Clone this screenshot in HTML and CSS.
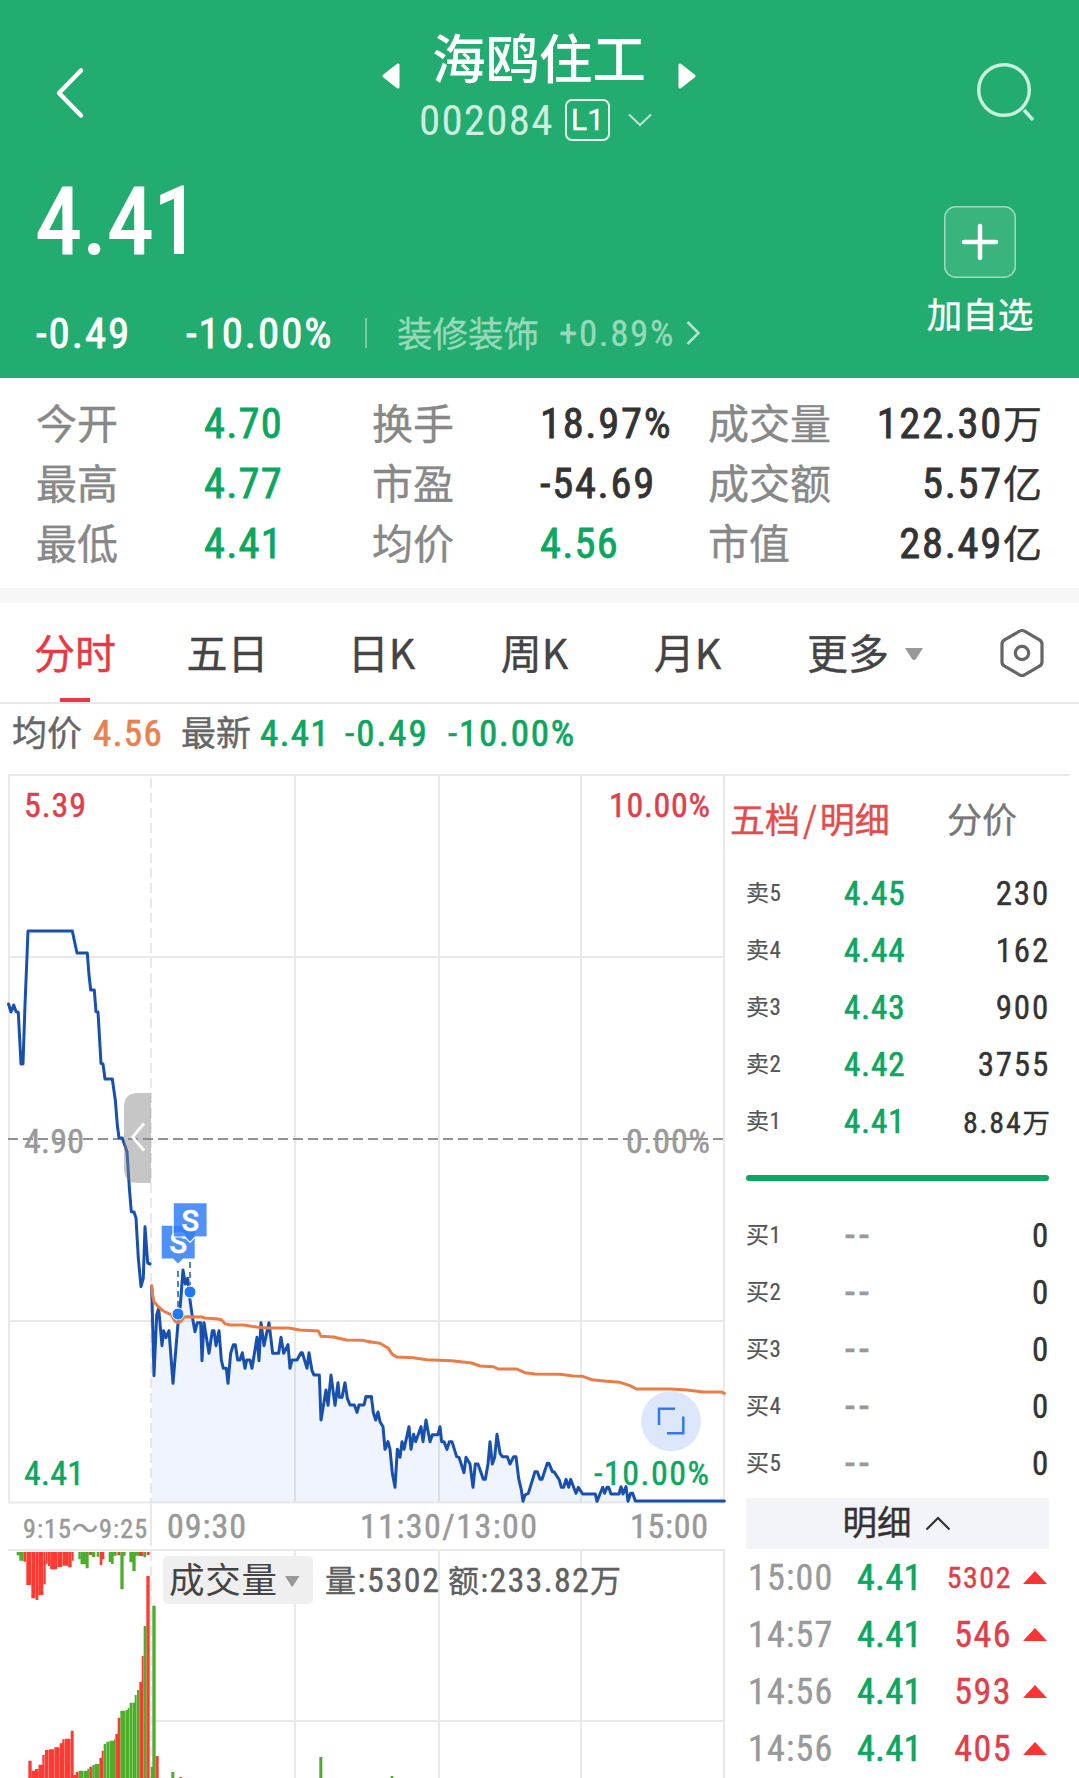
FILE: index.html
```
<!DOCTYPE html>
<html lang="zh-CN">
<head>
<meta charset="utf-8">
<title>海鸥住工 002084</title>
<link rel="stylesheet" href="styles.css">
</head>
<body>
<header class="head">
  <div class="nav">
    <svg class="back" width="32" height="56" viewBox="0 0 32 56"><path d="M27 5.500L5 28l22 22.500"/></svg>
    <div class="title">
      <div class="title-row">
        <svg width="18" height="26" viewBox="0 0 18 26"><path d="M16 2v22L2 13z"/></svg>
        <h1>海鸥住工</h1>
        <svg width="18" height="26" viewBox="0 0 18 26"><path d="M2 2v22l14-11z"/></svg>
      </div>
      <div class="code-row">
        <span class="code">002084</span><span class="level">L1</span>
        <svg width="24" height="14" viewBox="0 0 24 14"><path d="M1 1.500L12 12 23 1.500"/></svg>
      </div>
    </div>
    <svg class="search" width="60" height="60" viewBox="0 0 60 60"><circle cx="28" cy="29" r="25.300"/><path d="M48 49l9 10"/></svg>
  </div>
  <div class="quote">
    <div class="quote-main">
      <div class="price">4.41</div>
      <div class="change">
        <span class="diff">-0.49</span><span class="pct">-10.00%</span><i class="bar"></i>
        <span class="sector">装修装饰</span><span class="sector-pct">+0.89%</span>
        <svg width="14" height="24" viewBox="0 0 14 24"><path d="M1.500 1L12.500 12 1.500 23"/></svg>
      </div>
    </div>
    <div class="add">
      <svg width="72" height="72" viewBox="0 0 72 72"><rect x=".75" y=".75" width="70.500" height="70.500" rx="11"/><path d="M36 20v32M20 36h32"/></svg>
      <span>加自选</span>
    </div>
  </div>
</header>

<section class="stats">
  <span class="k">今开</span><span class="v down">4.70</span><span class="k">换手</span><span class="v">18.97%</span><span class="k">成交量</span><span class="v end">122.30<b>万</b></span>
  <span class="k">最高</span><span class="v down">4.77</span><span class="k">市盈</span><span class="v">-54.69</span><span class="k">成交额</span><span class="v end">5.57<b>亿</b></span>
  <span class="k">最低</span><span class="v down">4.41</span><span class="k">均价</span><span class="v down">4.56</span><span class="k">市值</span><span class="v end">28.49<b>亿</b></span>
</section>

<nav class="tabs">
  <span class="tab on">分时</span><span class="tab">五日</span><span class="tab">日K</span><span class="tab">周K</span><span class="tab">月K</span>
  <span class="more">更多<svg width="20" height="14" viewBox="0 0 20 14"><path d="M1 1h18l-7 11q-2 2-4 0z"/></svg></span>
  <svg class="gear" width="44" height="50" viewBox="0 0 44 50"><path d="M19.500 3.200q2.500-1.400 5 0l15 8.600q2.500 1.500 2.500 4.200v18q0 2.700-2.500 4.200l-15 8.600q-2.500 1.400-5 0l-15-8.600Q2 36.700 2 34V16q0-2.700 2.500-4.200z"/><circle cx="22" cy="25" r="6.700"/></svg>
</nav>

<div class="info">
  <span class="lab">均价</span><span class="n avg">4.56</span><span class="lab l2">最新</span><span class="n n1">4.41</span><span class="n n2">-0.49</span><span class="n n3">-10.00%</span>
</div>

<main class="board">
  <svg class="chart" width="726" height="1004" viewBox="0 774 726 1004">
    <g class="area">
      <path transform="translate(0 1180) scale(.33333)" d="M455 966V318L462 587 470 405 476 385 486 497 491 452 498 473 507 452 519 610 534 430 541 375 549 270 556 312 563 295 570 360 577 410 585 455 592 428 602 428 606 542 612 428 627 520 637 452 642 452 648 497 657 452 664 540 670 565 679 565 684 610 692 520 700 494 706 494 713 540 720 540 727 518 735 565 740 540 750 540 756 565 771 472 777 542 783 428 792 497 807 428 818 520 836 520 843 472 851 520 864 494 870 565 876 540 891 540 903 518 907 518 921 565 927 518 936 572 942 585 958 585 963 720 978 630 984 676 993 585 1005 676 1014 608 1018 652 1026 652 1035 608 1042 655 1050 675 1063 675 1071 697 1077 675 1092 675V966z"/>
      <path transform="translate(360 1280) scale(.33333)" d="M10 666V375L12 375 18 350 34 350 40 398 47 420 54 396 60 425 69 440 75 508 84 485 90 508 97 580 105 622 112 508 120 532 126 485 132 508 147 440 153 508 161 463 167 485 183 440 189 485 198 420 210 485 217 464 234 464 240 440 245 485 252 485 261 508 268 485 276 485 290 530 297 532 312 578 318 532 330 552 339 622 346 552 354 552 370 598 376 598 384 552 390 485 397 552 404 532 411 463 420 520 427 530 442 530 450 552 461 530 468 530 476 595 484 630 489 664 495 645 505 640 525 575 532 575 540 598 546 598 562 550 567 550 577 575 582 575 598 600 604 622 641 622 668 642 818 642 826 666zM10 375V666H12V375z"/>
      <path d="M363 1408H372V1502H363z"/>
    </g>
    <g class="grid">
      <path d="M8 775H726M9 774V1503M8 957H725M8 1321H725M8 1502.500H725M295 776V1502M439 776V1502M581 776V1502M724 776V1502M151 1503V1546M8 1550H725M295 1551V1778M439 1551V1778M581 1551V1778M724 1551V1778M152 1721H725"/>
      <path class="dash" d="M151 778V1502M151 1551V1778"/>
    </g>
    <path class="mid" d="M8 1139H724"/>

    <text class="t gray" x="24" y="1153" textLength="60">4.90</text>
    <text class="t gray" x="626" y="1153" textLength="84">0.00%</text>
    <text class="t red" x="24" y="817" textLength="62">5.39</text>
    <text class="t red" x="609" y="817" textLength="101">10.00%</text>

    <polyline class="line" points="8.500,1004 11,1012 13.700,1005 16,1011.500 18.300,1012.500 21,1064 23,1064 25,1005 28,931 72.300,931 77,953 87.300,953 89,975 90.700,990 94.300,990 96,1011.700 98,1012 101,1063.300 103,1064 105,1079 112.300,1079 115.300,1100 117.300,1125 119,1137.700 122.300,1138 127,1151.700 128.500,1175 129.500,1190 131.300,1211.700 134,1212 136,1218 138.300,1258 141,1286.700 143.300,1278 145,1226.700 147.700,1263 150,1264"/>
    <g transform="translate(0 1180) scale(.33333)">
      <polyline class="line x3" points="455,318 462,587 470,405 476,385 486,497 491,452 498,473 507,452 519,610 534,430 541,375 549,270 556,312 563,295 570,360 577,410 585,455 592,428 602,428 606,542 612,428 627,520 637,452 642,452 648,497 657,452 664,540 670,565 679,565 684,610 692,520 700,494 706,494 713,540 720,540 727,518 735,565 740,540 750,540 756,565 771,472 777,542 783,428 792,497 807,428 818,520 836,520 843,472 851,520 864,494 870,565 876,540 891,540 903,518 907,518 921,565 927,518 936,572 942,585 958,585 963,720 978,630 984,676 993,585 1005,676 1014,608 1018,652 1026,652 1035,608 1042,655 1050,675 1063,675 1071,697 1077,675 1092,675 1098,650 1114,650"/>
      <polyline class="line x3 avgline" points="455,317 458,345 462,365 475,380 490,393 505,400 515,405 518,412 525,424 534,428 543,424 551,412 560,410 605,411 615,414 655,417 665,420 675,431 690,435 730,435 770,441 800,444 865,444 900,450 955,453 963,469 1000,471 1040,480 1090,481 1110,486"/>
    </g>
    <g transform="translate(360 1280) scale(.33333)">
      <polyline class="line x3" points="18,350 34,350 40,398 47,420 54,396 60,425 69,440 75,508 84,485 90,508 97,580 105,622 112,508 120,532 126,485 132,508 147,440 153,508 161,463 167,485 183,440 189,485 198,420 210,485 217,464 234,464 240,440 245,485 252,485 261,508 268,485 276,485 290,530 297,532 312,578 318,532 330,552 339,622 346,552 354,552 370,598 376,598 384,552 390,485 397,552 404,532 411,463 420,520 427,530 442,530 450,552 461,530 468,530 476,595 484,630 489,664 495,645 505,640 525,575 532,575 540,598 546,598 562,550 567,550 577,575 582,575 598,600 604,622 611,622 618,598 626,622 632,598 641,622 648,640 655,622 668,642 706,642 711,664 720,642 728,622 734,640 741,622 746,622 753,642 777,642 783,620 789,642 798,620 804,664 812,640 818,640 826,663 1093,663"/>
      <polyline class="line x3 avgline" points="28,185 60,190 85,205 97,223 110,231 160,233 200,239 275,242 335,249 360,258 400,260 415,267 470,267 495,278 525,282 600,283 640,288 668,289 695,299 740,304 780,307 810,317 830,327 930,327 980,330 1030,336 1085,336 1093,340"/>
    </g>

    <path class="drawer" d="M151 1093H138Q124 1093 124 1107V1169Q124 1183 138 1183H151z"/>
    <path class="drawer-arrow" d="M144 1123.500L132.500 1137 144 1150.500"/>

    <path class="drop" d="M178 1271V1312M190 1242V1285"/>
    <path class="flag" d="M161.700 1225.700H194.700V1258.500H183L178 1263.500 173 1258.500H161.700z"/>
    <text class="s" x="178.300" y="1252.500" text-anchor="middle">S</text>
    <path class="flag front" d="M173.500 1203.300H206.600V1236.700H195L190 1242 185 1236.700H173.500z"/>
    <path class="flag-edge" d="M173 1204V1237H185L190 1242.300 195 1237H207"/>
    <text class="s" x="190.300" y="1230.500" text-anchor="middle">S</text>
    <circle class="dot" cx="178" cy="1314" r="6"/><circle class="dot" cx="190" cy="1292" r="6"/>

    <circle class="zoom-bg" cx="671" cy="1421.300" r="30"/>
    <path class="zoom" d="M659 1425V1408.700H675M683.300 1416.500V1433.300H667"/>
    <text class="t green" x="24" y="1485" textLength="60">4.41</text>
    <text class="t green" x="594" y="1485" textLength="115">-10.00%</text>

    <text class="t gray sm" x="23" y="1538" textLength="124">9:15～9:25</text>
    <text class="t gray" x="167" y="1538" textLength="79">09:30</text>
    <text class="t gray" x="360" y="1538" textLength="177">11:30/13:00</text>
    <text class="t gray" x="630" y="1538" textLength="78">15:00</text>

    <g transform="translate(0 1530) scale(.33333)">
      <path class="up" d="M70 66H78V95H70zM79 66H93V165H79zM94 66H106V205H94zM107 66H115V210H107zM115.500 66H130V195H115.500zM131 66H137V163H131zM138 66H143V103H138zM144 66H150V108H144zM150.500 66H171V118H150.500zM172 66H187V111H172zM188 66H204V107H188zM204.500 66H215V112H204.500zM216 66H221V92H216zM266 66H276V75H266zM299 66H307V105H299zM307 66H313V88H307zM352 66H361V76H352zM417 66H430V78H417zM440 66H449V75H440z"/>
      <path class="dn" d="M50 66H58V76H50zM58 66H70V92H58zM235 66H241V88H235zM241.500 66H257V103H241.500zM257 66H266V115H257zM276 66H286V81H276zM290 66H298V80H290zM326 66H333V96H326zM333 66H341V102H333zM341 66H350V77H341zM361 66H371V178H361zM371 66H377V77H371zM388 66H397V97H388zM397 66H407V123H397zM407 66H417V77H407zM430 66H438V82H430z"/>
      <path class="up" d="M85 744V692H95V744zM95.500 744V722H105V744zM105 744V717H115V744zM115.500 744V704H127V744zM127 744V675H134V744zM135 744V660H146V744zM147 744V658H162V744zM163 744V652H178V744zM179 744V640H187V744zM187 744V628H194V744zM195 744V626H211V744zM212 744V602H221V744zM221 744V735H227V744zM227 744V726H236V744zM268 744V710H277V744zM298 744V684H305V744zM305 744V662H311V744zM346 744V612H353V744zM353 744V563H361V744zM418 744V456H425V744zM425 744V378H431V744zM439 744V138H449V744zM467 744V678H476V744zM538 744V741H547V744z"/>
      <path class="dn" d="M236 744V722H251V744zM252 744V722H262V744zM262 744V716H268V744zM277 744V705H284V744zM284.500 744V702H298V744zM311 744V642H318V744zM319 744V635H328V744zM329 744V632H342V744zM342 744V628H346V744zM361 744V542H376V744zM377 744V540H383V744zM383 744V534H388V744zM389 744V518H397V744zM398 744V518H404V744zM404 744V495H410V744zM411 744V480H418V744zM431 744V288H439V744zM452 744V711H457V744zM457 744V227H467V744zM514 744V726H523V744zM958 744V681H967V744zM1172 744V738H1180V744z"/>
    </g>

    <rect class="pick" x="163" y="1556" width="150" height="48" rx="5"/>
    <text class="cjk dark" x="169" y="1593" textLength="108">成交量</text>
    <path class="gray" d="M285 1576H299.500L293 1586Q292.200 1587.500 291.300 1586z"/>
    <text class="t mid-gray" x="325" y="1592" textLength="114"><tspan class="ch">量</tspan>:5302</text>
    <text class="t mid-gray" x="448" y="1592" textLength="173"><tspan class="ch">额</tspan>:233.82<tspan class="ch">万</tspan></text>
  </svg>

  <aside class="side">
    <div class="side-tabs"><span class="on">五档<i>/</i>明细</span><span>分价</span></div>
    <div class="book">
      <div class="lv"><span class="name">卖5</span><span class="p">4.45</span><span class="q">230</span></div>
      <div class="lv"><span class="name">卖4</span><span class="p">4.44</span><span class="q">162</span></div>
      <div class="lv"><span class="name">卖3</span><span class="p">4.43</span><span class="q">900</span></div>
      <div class="lv"><span class="name">卖2</span><span class="p">4.42</span><span class="q">3755</span></div>
      <div class="lv"><span class="name">卖1</span><span class="p">4.41</span><span class="q small">8.84<b>万</b></span></div>
    </div>
    <div class="ratio"></div>
    <div class="book">
      <div class="lv"><span class="name">买1</span><span class="p none">--</span><span class="q">0</span></div>
      <div class="lv"><span class="name">买2</span><span class="p none">--</span><span class="q">0</span></div>
      <div class="lv"><span class="name">买3</span><span class="p none">--</span><span class="q">0</span></div>
      <div class="lv"><span class="name">买4</span><span class="p none">--</span><span class="q">0</span></div>
      <div class="lv"><span class="name">买5</span><span class="p none">--</span><span class="q">0</span></div>
    </div>
    <div class="detail-head">明细<svg width="26" height="15" viewBox="0 0 26 15"><path d="M1.500 13.500L13 2l11.500 11.500"/></svg></div>
    <div class="ticks">
      <div class="tick"><span class="time">15:00</span><span class="tp">4.41</span><span class="tv small">5302</span><i></i></div>
      <div class="tick"><span class="time">14:57</span><span class="tp">4.41</span><span class="tv">546</span><i></i></div>
      <div class="tick"><span class="time">14:56</span><span class="tp">4.41</span><span class="tv">593</span><i></i></div>
      <div class="tick"><span class="time">14:56</span><span class="tp">4.41</span><span class="tv">405</span><i></i></div>
    </div>
  </aside>
</main>
</body>
</html>
```
FILE: styles.css
```
* { box-sizing: border-box; margin: 0; padding: 0; }
body {
  width: 1079px; height: 1778px; overflow: hidden; background: #fff; color: #333;
  font-family: "Roboto Condensed", "Noto Sans CJK SC", sans-serif;
  white-space: nowrap;
  -webkit-text-stroke: .4px;
}
svg { display: block; flex: none; }
b { font-family: "Noto Sans CJK SC", sans-serif; font-weight: 400; letter-spacing: 0; }
span { flex: none; }

/* header */
.head { height: 378px; background: #22ac6f; color: #fff; }
.nav { display: flex; height: 160px; padding: 0 43px 0 54px; }
.back { margin-top: 65px; fill: none; stroke: #fff; stroke-width: 4.500; stroke-linecap: round; stroke-linejoin: round; }
.title { display: flex; flex-direction: column; align-items: center; width: 314px; margin-left: 296px; padding-top: 26px; }
.title-row { display: flex; justify-content: space-between; width: 314px; height: 63px; }
.title-row svg { margin-top: 37px; fill: #fff; stroke: #fff; stroke-width: 3; stroke-linejoin: round; }
h1 { font: 500 53.500px/60px "Noto Sans CJK SC", sans-serif; -webkit-text-stroke: 0; }
.code-row { display: flex; align-items: center; width: 100%; height: 62px; padding-left: 37px; }
.code { width: 146px; font-size: 43px; letter-spacing: 1.200px; color: rgba(255,255,255,.8); -webkit-text-stroke: 0; }
.level { width: 45px; height: 42px; border: 2px solid #e4f7ee; border-radius: 7px; font: 400 30px/38px Roboto, sans-serif; text-align: center; }
.code-row svg { margin-left: 18px; fill: none; stroke: #b9e6d1; stroke-width: 2; }
.search { margin: 61px 0 0 auto; fill: none; stroke: #c8efdd; stroke-width: 3.500; }
.quote { display: flex; justify-content: space-between; padding: 0 45px 0 36px; }
.price { height: 120px; font-size: 92px; line-height: 124px; letter-spacing: 1px; -webkit-text-stroke: 2px; }
.change { display: flex; align-items: center; height: 60px; margin-top: 23px; font-size: 43px; -webkit-text-stroke: .8px; }
.diff { width: 150px; letter-spacing: 1.900px; }
.pct { width: 179px; letter-spacing: 1.900px; }
.bar { width: 2px; height: 30px; background: #7bcda8; }
.sector { width: 162px; margin: -4px 0 0 30px; font-size: 35.500px; color: #97d9b9; -webkit-text-stroke: .3px; }
.sector-pct { width: 127px; font-size: 37px; letter-spacing: 1.600px; color: #97d9b9; -webkit-text-stroke: .3px; }
.change svg { fill: none; stroke: #b3e3cc; stroke-width: 2.500; }
.add { display: flex; flex-direction: column; align-items: center; width: 108px; padding-top: 46px; font-size: 35.500px; line-height: 50px; }
.add svg { margin-bottom: 13px; }
.add rect { fill: #39b47d; stroke: #a0dbc1; stroke-width: 1.500; }
.add path { stroke: #fff; stroke-width: 4.500; stroke-linecap: round; }

/* key figures */
.stats { display: grid; grid-template-columns: 168px 168px 168px 168px 1fr auto; grid-auto-rows: 60px; height: 225px; padding: 16px 37px 0 36px; border-bottom: 15px solid #f7f7f7; line-height: 60px; }
.k { padding-top: 1px; font-size: 41px; color: #888; }
.v { font-size: 42.500px; letter-spacing: 1.700px; -webkit-text-stroke: .8px; }
.v.end { margin-top: -3px; }
.v b { font-size: 39px; -webkit-text-stroke: .4px; }
.end { justify-self: end; }
.down { color: #0ba65f; }
.v.down { letter-spacing: 1.200px; }

/* period tabs */
.tabs { display: flex; height: 101px; border-bottom: 2px solid #e8e8e8; font: 400 41px/97px "Noto Sans CJK SC", sans-serif; color: #444; }
.tab { width: 153px; text-align: center; }
.tab:first-child { width: 150px; }
.tab:nth-child(2) { width: 155px; }
.on { color: #e93844; }
.tab.on { background: linear-gradient(#e93844, #e93844) 60px 95px / 30px 4px no-repeat; }
.more { display: flex; align-items: center; height: 97px; width: 194px; padding-left: 43px; }
.more svg { margin: 4px 0 0 15px; fill: #999; }
.gear { margin: 25px 0 0 42px; fill: none; stroke: #666; stroke-width: 3.200; }

/* latest figures */
.info { display: flex; height: 70px; padding-left: 12px; line-height: 60px; }
.lab { padding-top: 1px; font-size: 35px; color: #666; }
.l2 { width: 79px; }
.n { font-size: 37px; letter-spacing: 1.400px; color: #0ba65f; -webkit-text-stroke: .7px; }
.avg { width: 88px; margin-left: 11px; color: #e8814d; }
.n1 { width: 85px; }
.n2 { width: 103px; letter-spacing: 2px; }
.n3 { letter-spacing: 1.800px; }

/* chart */
.board { display: flex; height: 1004px; }
.area path { fill: #eff4fe; }
.grid path { fill: none; stroke: rgba(0,0,0,.085); stroke-width: 2; }
.grid .dash { stroke-dasharray: 10 5; }
.mid { stroke: #929292; stroke-width: 2; stroke-dasharray: 10 5; }
.t { font: 400 34px "Roboto Condensed", "Noto Sans CJK SC", sans-serif; }
.t.sm { font-size: 26px; }
.ch { font: 400 31px "Noto Sans CJK SC", sans-serif; }
.cjk { font: 400 35.500px "Noto Sans CJK SC", sans-serif; }
.gray { fill: #999; }
.mid-gray { fill: #606060; }
.dark { fill: #444; }
.red { fill: #e03e49; }
.green { fill: #0ba65f; }
.line { fill: none; stroke: #1850b0; stroke-width: 3; stroke-linejoin: round; stroke-linecap: round; }
.x3 { stroke-width: 9; }
.avgline { stroke: #ea7c47; }
.drawer { fill: rgba(128,128,128,.45); }
.drawer-arrow { fill: none; stroke: #fff; stroke-width: 2.700; }
.drop { stroke: #4a86b8; stroke-width: 2; stroke-dasharray: 6 4; }
.flag { fill: #4f90fb; }
.flag.front { fill: rgba(50,126,251,.85); }
.flag-edge { fill: none; stroke: #fff; stroke-width: 1.200; }
.s { font: 500 29px Roboto, sans-serif; fill: #fff; }
.dot { fill: #2279fb; stroke: #fff; stroke-width: 1; }
.zoom-bg { fill: #dde7fc; }
.zoom { fill: none; stroke: #3478f0; stroke-width: 2.500; }
.up { fill: #ff3a33; }
.dn { fill: #4cae2b; }
.pick { fill: #efefef; }

/* order book */
.side { width: 344px; margin-right: 9px; padding: 0 21px 0 20px; border-top: 2px solid #eaeaea; }
.side-tabs { display: flex; justify-content: space-between; height: 89px; margin-left: -16px; padding-right: 32px; font: 400 35px/84px "Noto Sans CJK SC", sans-serif; color: #777; }
.side-tabs .on { color: #e44c4c; }
.side-tabs i { margin: 0 3px; font-style: normal; }
.lv { display: flex; height: 57px; line-height: 57px; }
.name { width: 98px; font-size: 23px; color: #555; letter-spacing: .5px; -webkit-text-stroke: .2px; }
.p { width: 80px; font-size: 33px; letter-spacing: 1px; color: #0ba65f; -webkit-text-stroke: .7px; }
.none { padding-left: 1px; color: #999; font-size: 40px; letter-spacing: 4px; }
.q { flex: 1; text-align: right; font-size: 33px; letter-spacing: 1.800px; margin-right: -1px; }
.q.small { font-size: 30px; }
.q b { font-size: 27.500px; }
.ratio { height: 6px; margin: 25px 0 26px; border-radius: 3px; background: #0ba65f; }
.detail-head { display: flex; align-items: center; justify-content: center; height: 51px; margin-top: 6px; padding-right: 2px; background: #f3f4f9; font-size: 34.500px; line-height: 51px; color: #333; }
.detail-head svg { margin-left: 13px; fill: none; stroke: #333; stroke-width: 2.200; }
.tick { display: flex; align-items: center; height: 57px; padding-left: 2px; font-size: 36px; }
.time { width: 109px; color: #999; letter-spacing: 1.200px; }
.tp { width: 66px; color: #0ba65f; letter-spacing: .6px; -webkit-text-stroke: .7px; }
.tv { flex: 1; text-align: right; color: #e03e49; letter-spacing: 1.500px; }
.tv.small { font-size: 30px; }
.tick i { margin: 0 2px 0 11px; border: solid transparent; border-width: 0 12.500px 13px; border-bottom-color: #f93433; }
.t, .cjk { stroke: currentColor; stroke-width: 0; -webkit-text-stroke: 0; }
.t.gray { stroke: #999; stroke-width: .5; }
.t.red { stroke: #e03e49; stroke-width: .5; }
.t.green { stroke: #0ba65f; stroke-width: .5; }
.t.mid-gray { stroke: #606060; stroke-width: .4; }
.s { stroke: #fff; stroke-width: .6; }
```
